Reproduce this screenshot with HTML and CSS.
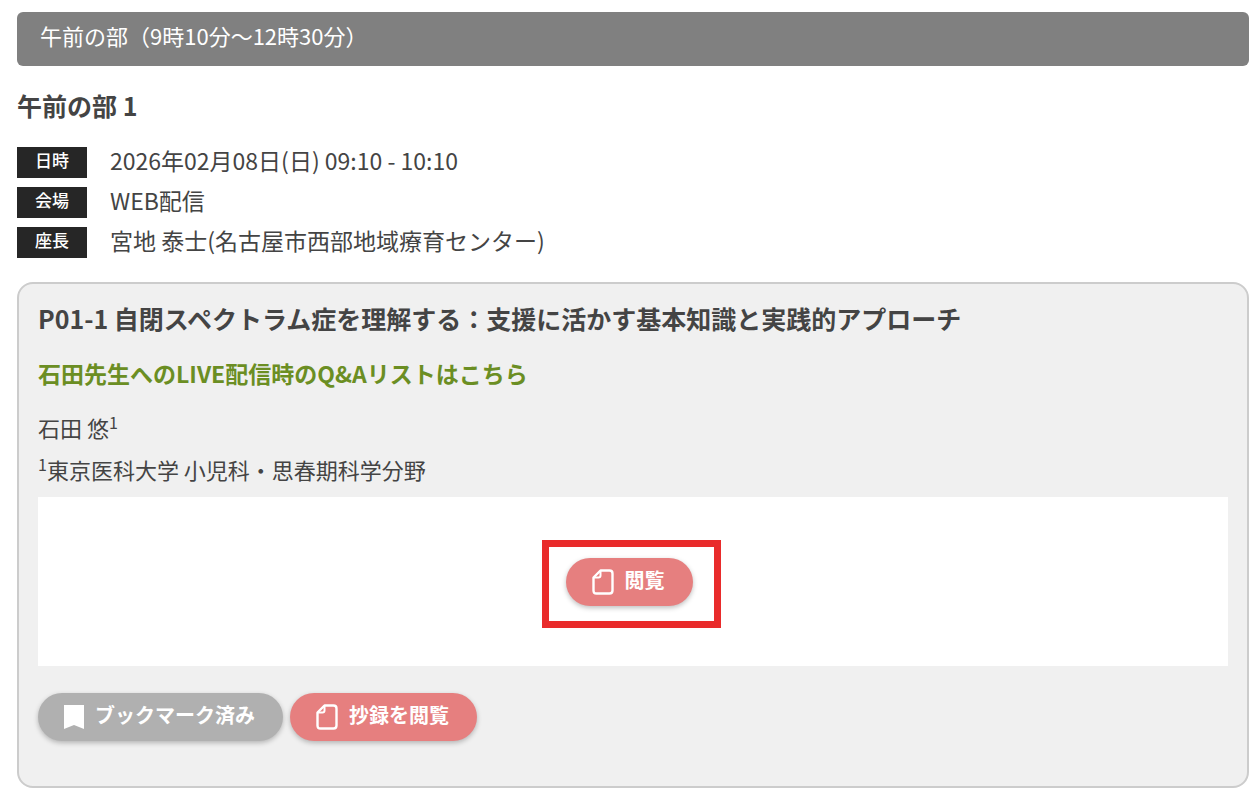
FILE: index.html
```html
<!DOCTYPE html>
<html lang="ja">
<head>
<meta charset="utf-8">
<meta name="viewport" content="width=device-width, initial-scale=1">
<title>午前の部</title>
<link rel="stylesheet" href="styles.css">
</head>
<body>
<svg class="sprite" aria-hidden="true">
  <symbol id="icon-page" viewBox="0 0 22 26">
    <path d="M8.500 1.500H17.500Q20.500 1.500 20.500 4.500V21.500Q20.500 24.500 17.500 24.500H4.500Q1.500 24.500 1.500 21.500V8.500Z" fill="none" stroke="currentColor" stroke-width="2.400" stroke-linejoin="round"/>
    <path d="M8.500 2V6.500Q8.500 8.500 6.500 8.500H2" fill="none" stroke="currentColor" stroke-width="2"/>
  </symbol>
  <symbol id="icon-bookmark" viewBox="0 0 20 24">
    <path d="M0 0H20V24L10 20L0 24Z" fill="currentColor"/>
  </symbol>
</svg>
<main class="page">
  <h1 class="part-bar">午前の部（9時10分～12時30分）</h1>
  <section>
    <h2 class="session-title">午前の部 1</h2>
    <dl class="details">
      <div class="detail"><dt class="label">日時</dt><dd class="value">2026年02月08日(日) 09:10 - 10:10</dd></div>
      <div class="detail"><dt class="label">会場</dt><dd class="value">WEB配信</dd></div>
      <div class="detail"><dt class="label">座長</dt><dd class="value">宮地 泰士(名古屋市西部地域療育センター)</dd></div>
    </dl>
    <article class="card">
      <h3 class="card-title">P01-1 自閉スペクトラム症を理解する：支援に活かす基本知識と実践的アプローチ</h3>
      <p class="qa"><a class="qa-link" href="#qa">石田先生へのLIVE配信時のQ&amp;Aリストはこちら</a></p>
      <p class="person">石田 悠<sup>1</sup></p>
      <p class="person"><sup>1</sup>東京医科大学 小児科・思春期科学分野</p>
      <div class="viewer">
        <div class="highlight">
          <button class="button button-view" type="button"><svg class="icon-page"><use href="#icon-page"/></svg><span>閲覧</span></button>
        </div>
      </div>
      <div class="actions">
        <button class="button button-saved" type="button"><svg class="icon-bookmark"><use href="#icon-bookmark"/></svg><span>ブックマーク済み</span></button>
        <button class="button button-view" type="button"><svg class="icon-page"><use href="#icon-page"/></svg><span>抄録を閲覧</span></button>
      </div>
    </article>
  </section>
</main>
</body>
</html>
```
FILE: styles.css
```css
* {
  box-sizing: border-box;
  margin: 0;
  padding: 0;
}

body {
  background: #fff;
  color: #444;
  font-family: "Noto Sans CJK JP", sans-serif;
  font-size: 22px;
}

.sprite {
  display: none;
}

.page {
  padding: 12px 7px 7px 17px;
}

.part-bar {
  padding: 8px 23px 16px;
  border-radius: 6px;
  background: #808080;
  color: #fff;
  font-size: 22px;
  font-weight: 400;
  line-height: 30px;
}

.session-title {
  margin-top: 21px;
  font-size: 25px;
  font-weight: 700;
  line-height: 36px;
}

.details {
  display: grid;
  gap: 9px;
  margin-top: 24px;
}

.detail {
  display: flex;
  gap: 23px;
}

.label {
  width: 70px;
  padding-bottom: 6px;
  background: #262626;
  color: #fff;
  font-size: 17px;
  font-weight: 500;
  line-height: 25px;
  text-align: center;
}

.value {
  font-size: 23px;
  line-height: 26px;
}

.card {
  margin-top: 24px;
  padding: 16px 19px 45px;
  border: 2px solid #ccc;
  border-radius: 16px;
  background: #f0f0f0;
}

.card-title {
  font-size: 25px;
  font-weight: 700;
  line-height: 36px;
}

.qa {
  margin: 19px 0 15px;
  font-size: 23px;
  line-height: 36px;
}

.qa-link {
  color: #6b8e23;
  font-weight: 700;
  text-decoration: none;
}

.person {
  line-height: 42px;
}

sup {
  font-size: 16px;
  line-height: 0;
}

.viewer {
  display: flex;
  justify-content: center;
  margin-top: 7px;
  padding: 43px 4px 38px 0;
  background: #fff;
}

.highlight {
  display: flex;
  padding: 11px 21px 15px 17px;
  border: 7px solid #e92b2b;
}

.actions {
  display: flex;
  gap: 7px;
  margin-top: 27px;
}

.button {
  display: flex;
  align-items: center;
  gap: 11px;
  height: 48px;
  padding: 0 28px 0 26px;
  border: 0;
  border-radius: 24px;
  box-shadow: 0 2px 5px rgba(0, 0, 0, 0.25);
  color: #fff;
  font-family: inherit;
  font-size: 20px;
  font-weight: 700;
  line-height: 44px;
}

.button span {
  padding-bottom: 4px;
}

.button-view {
  background: #e67f7f;
}

.button-saved {
  background: #b0b0b0;
}

.icon-page {
  width: 22px;
  height: 26px;
}

.icon-bookmark {
  width: 20px;
  height: 24px;
}
```
